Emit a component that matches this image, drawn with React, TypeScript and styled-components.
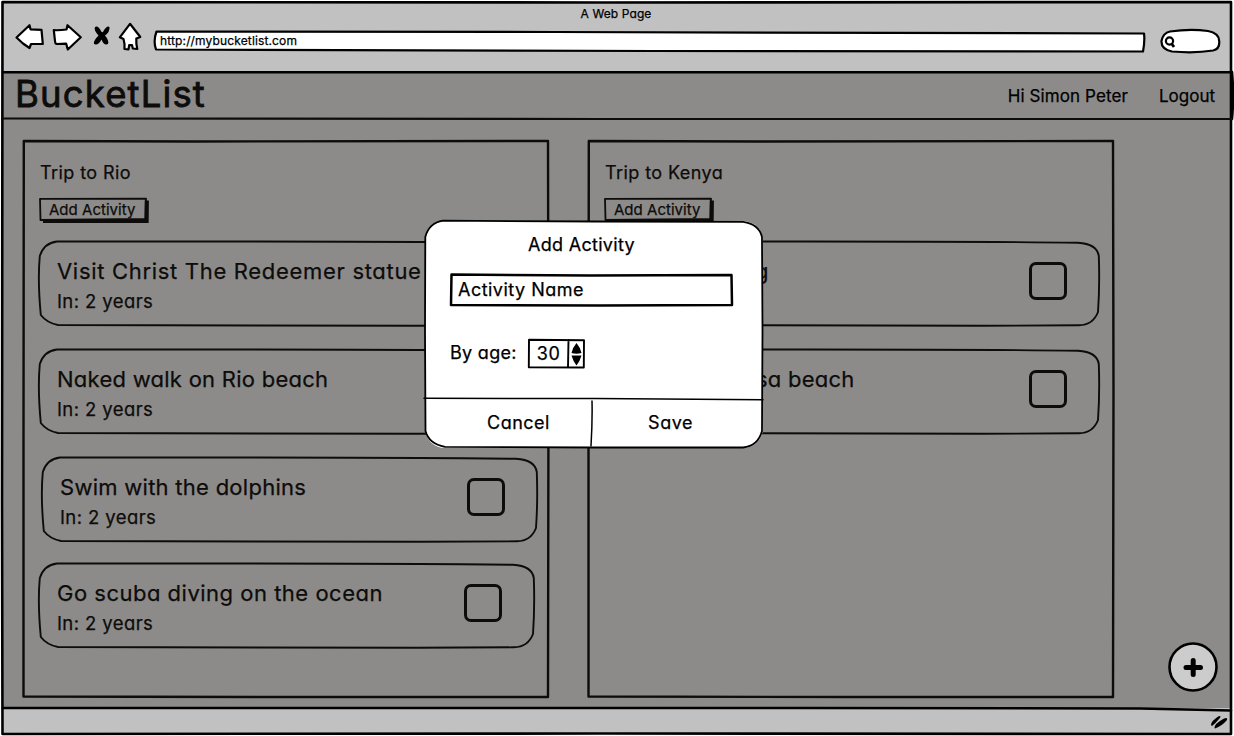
import React from 'react';
import styled, { createGlobalStyle } from 'styled-components';

const ink = '#0d0c0b';

const GlobalStyle = createGlobalStyle`
  * { box-sizing: border-box; }
  body {
    margin: 0;
    background: #fff;
    color: ${ink};
    font-family: Inter, "Open Sans", sans-serif;
    font-feature-settings: 'cv11';
    overflow: hidden;
  }
`;

const Browser = styled.div`
  position: relative;
  display: flex;
  flex-direction: column;
  width: 1234px;
  height: 736px;
  padding: 2px 3px 2px 3px;
`;

const Text = styled.span<{ $size: number; $track?: number }>`
  display: block;
  font-size: ${p => p.$size}px;
  letter-spacing: ${p => p.$track ?? 0}px;
  line-height: 24px;
  white-space: nowrap;
  -webkit-text-stroke: 0.25px currentColor;
`;

const Drawing = styled.svg`
  position: absolute;
  inset: 0;
  width: 100%;
  height: 100%;
  overflow: visible;
  pointer-events: none;
  fill: none;
  stroke: ${ink};
  stroke-linejoin: round;
  stroke-linecap: round;
`;

const Chrome = styled.header`
  display: flex;
  flex-direction: column;
  flex: 0 0 70px;
  background: #c1c1c1;
  color: #000;
`;

const WindowTitle = styled.div`
  display: flex;
  justify-content: center;
  height: 24px;
  padding-right: 2px;
`;

const Toolbar = styled.div`
  display: flex;
  align-items: flex-start;
  height: 30px;
  margin-top: -4px;
`;

const NavIcons = styled.svg`
  flex: none;
  width: 151px;
  height: 30px;
  fill: #fff;
  stroke: #000;
  stroke-width: 2.2;
  stroke-linejoin: round;
`;

const AddressBar = styled.div`
  position: relative;
  width: 990px;
  height: 20px;
  margin-top: 9px;
  padding-left: 6px;
  display: flex;
  align-items: center;
`;

const Url = styled(Text)`
  position: relative;
`;

const SearchPill = styled.svg`
  flex: none;
  width: 62px;
  height: 30px;
  margin-left: 15px;
  margin-top: 5px;
  fill: #fff;
  stroke: #000;
  stroke-width: 2.2;
`;

const NavBar = styled.nav`
  display: flex;
  align-items: center;
  flex: 0 0 47px;
  padding: 0 16px 0 12px;
  background: #8c8b89;
`;

const Brand = styled(Text)`
  flex: 1;
  line-height: 42px;
  margin-top: -3px;
  -webkit-text-stroke-width: 0.8px;
`;

const UserName = styled(Text)`
  margin-right: 31px;
  color: #000;
`;

const Logout = styled(Text)`
  color: #000;
`;

const Board = styled.main`
  display: flex;
  align-items: flex-start;
  gap: 39px;
  flex: 1;
  padding: 22px 0 0 20px;
  background: #8c8b89;
`;

const Panel = styled.section`
  position: relative;
  display: flex;
  flex-direction: column;
  align-items: flex-start;
  width: 526px;
  height: 557px;
  padding: 20px 0 0 16px;
`;

const PanelTitle = styled(Text)`
  padding-left: 1px;
`;

const AddButton = styled.button`
  position: relative;
  width: 108px;
  height: 23px;
  margin: 13px 0 20px;
  padding: 0 0 0 10px;
  border: 0;
  background: none;
  color: inherit;
  font-family: inherit;
  font-feature-settings: inherit;
  text-align: left;
`;

const CardList = styled.div`
  display: flex;
  flex-direction: column;
`;

const Card = styled.article<{ $shift: number; $gap: number }>`
  position: relative;
  display: flex;
  justify-content: space-between;
  width: 496px;
  height: 84px;
  margin-left: ${p => p.$shift}px;
  margin-bottom: ${p => p.$gap}px;
  padding: 18px 33px 0 18px;
`;

const CardText = styled.div<{ $indent: number }>`
  padding-left: ${p => p.$indent}px;
`;

const Due = styled(Text)`
  margin-top: 6px;
`;

const Checkbox = styled.div`
  width: 38px;
  height: 38px;
  margin-top: 3px;
  border: 3px solid ${ink};
  border-radius: 7px;
`;

const StatusBar = styled.footer`
  display: flex;
  justify-content: flex-end;
  align-items: center;
  flex: 0 0 26px;
  padding-right: 2px;
  background: #c1c1c1;
`;

const Grip = styled.svg`
  width: 20px;
  height: 16px;
  fill: #000;
`;

const Fab = styled.button`
  position: absolute;
  left: 1168px;
  top: 642px;
  width: 50px;
  height: 50px;
  padding: 0;
  border: 0;
  background: none;
`;

const Modal = styled.div`
  position: absolute;
  left: 425px;
  top: 221px;
  display: flex;
  flex-direction: column;
  width: 338px;
  height: 227px;
  background: #fff;
  border-radius: 20px;
  color: #000;
`;

const ModalBody = styled.div`
  flex: 0 0 178px;
  padding: 12px 30px 0 25px;
`;

const ModalTitle = styled(Text)`
  padding-left: 78px;
`;

const NameField = styled.div`
  position: relative;
  display: flex;
  align-items: center;
  height: 31px;
  margin-top: 17px;
  padding-left: 8px;
`;

const AgeRow = styled.div`
  display: flex;
  align-items: center;
  gap: 11px;
  height: 30px;
  margin-top: 33px;
`;

const Stepper = styled.div`
  position: relative;
  display: flex;
  align-items: center;
  width: 57px;
  height: 29px;
  padding: 2px 0 0 9px;
`;

const ModalActions = styled.div`
  display: grid;
  grid-template-columns: 167px 1fr;
  flex: 1;
`;

const Action = styled.div<{ $offset: number }>`
  display: flex;
  align-items: center;
  justify-content: center;
  padding-left: ${p => Math.max(p.$offset, 0)}px;
  padding-right: ${p => Math.max(-p.$offset, 0)}px;
  padding-bottom: 2px;
`;

type Activity = { title: string; due?: string; track?: number; indent?: number; shift?: number; gap?: number };

function ActivityCard({ title, due, track = 0.3, indent = 0, shift = 0, gap = 24 }: Activity) {
  return (
    <Card $shift={shift} $gap={gap}>
      <Drawing viewBox="0 0 496 84" strokeWidth="1.900">
        <path d="M18 .5 C160 .8 330 -.3 474 1.800 Q493 3 494.800 15 C495.500 34 495.200 54 494 71 Q489 84 475 84.300 C320 85.500 160 84.800 19 84 Q8 82 1.800 74 C-.3 52 -.8 32 .8 15 Q5 2 18 .5 Z" />
      </Drawing>
      <CardText $indent={indent}>
        <Text $size={22} $track={track}>{title}</Text>
        {due && <Due $size={18.5} $track={0.4}>{due}</Due>}
      </CardText>
      <Checkbox />
    </Card>
  );
}

function TripPanel({ name, activities }: { name: string; activities: Activity[] }) {
  return (
    <Panel>
      <Drawing viewBox="0 0 526 557" strokeWidth="2.400">
        <path d="M.8 0 L170 .5 L525 0 L525.500 250 L525 556 L260 556 L.5 555.500 L.5 300 Z" />
      </Drawing>
      <PanelTitle $size={18} $track={0.42}>{name}</PanelTitle>
      <AddButton>
        <Drawing viewBox="0 0 108 23">
          <path strokeWidth="4.200" strokeLinecap="butt" strokeLinejoin="miter" d="M4 23 L107.600 22.800 L107.800 2.500" />
          <path strokeWidth="1.800" d="M1 .8 L107 .6 L106.500 21 L1.500 22 Z" />
        </Drawing>
        <Text $size={15} $track={0.02}>Add Activity</Text>
      </AddButton>
      <CardList>
        {activities.map(a => <ActivityCard key={a.title} {...a} />)}
      </CardList>
    </Panel>
  );
}

const rio: Activity[] = [
  { title: 'Visit Christ The Redeemer statue', due: 'In: 2 years', track: 0.69 },
  { title: 'Naked walk on Rio beach', due: 'In: 2 years', track: 0.26 },
  { title: 'Swim with the dolphins', due: 'In: 2 years', track: 0.27, shift: 3, gap: 22 },
  { title: 'Go scuba diving on the ocean', due: 'In: 2 years', track: 0.5 },
];

const kenya: Activity[] = [
  { title: 'g', indent: 133 },
  { title: 'sa beach', indent: 134, track: 0.25 },
];

export default function App() {
  return (
    <>
      <GlobalStyle />
      <Browser>
        <Chrome>
          <WindowTitle><Text $size={12} $track={0.1}>A Web Page</Text></WindowTitle>
          <Toolbar>
            <NavIcons viewBox="3 22 151 30">
              <path d="M16.500 37.500 L29.500 25.200 L30.500 29.300 L41.500 29.800 L42.800 44 L31 44 L29.500 48 L23 43.500 Z" />
              <path d="M53.800 30.200 Q60 30.500 66.500 29.500 L67.500 25.200 L80.800 37.200 L67.800 49.500 L66.200 43.700 L56.500 44 Q55 43.500 55 41 Z" />
              <path fill="#000" stroke="none" d="M95 27 Q98 25 101 31 Q102.500 33.500 103.500 31 Q107 25 109.500 27 Q110 32 105 35.500 Q109.500 41 108 44 Q104 46 101.500 39.500 Q98 46 94 44 Q93 41 98.500 35.500 Q93.500 30 95 27 Z" />
              <path d="M130 23.800 L140.300 37 L136.300 38.500 Q136 44 137.300 49 L132.800 48.500 L132 45 L129.200 45.200 L128.500 49.300 L124.500 49 Q125 44 123.500 39 L119.800 37.300 Z" />
            </NavIcons>
            <AddressBar>
              <Drawing viewBox="0 0 990 20" strokeWidth="2.200">
                <path fill="#fff" stroke="#000" d="M2.500 .5 L400 1 L990 2.500 Q991 10 989 20.500 L500 20 L2 18.500 Q-1 10 2.500 .5 Z" />
              </Drawing>
              <Url $size={12} $track={0.14}>http://mybucketlist.com</Url>
            </AddressBar>
            <SearchPill viewBox="1159 27 62 30">
              <path d="M1170 31.500 Q1190 28.500 1208 31 Q1219 33 1219.200 41 Q1220 49 1213 50.500 Q1195 53.500 1172 51.500 Q1161 49 1161.500 41 Q1163 33 1170 31.500 Z" />
              <circle cx="1169.500" cy="41" r="3.600" />
              <path strokeWidth="2.800" d="M1171.500 43.500 L1174 47" />
            </SearchPill>
          </Toolbar>
        </Chrome>
        <NavBar>
          <Brand $size={36.5} $track={1.15}>BucketList</Brand>
          <UserName $size={17} $track={0.1}>Hi Simon Peter</UserName>
          <Logout $size={17}>Logout</Logout>
        </NavBar>
        <Board>
          <TripPanel name="Trip to Rio" activities={rio} />
          <TripPanel name="Trip to Kenya" activities={kenya} />
        </Board>
        <StatusBar>
          <Grip viewBox="1209 714 20 16">
            <path d="M1211 726 Q1211 722 1219 717 Q1222 717 1219 720 Q1215 725 1212 727 Z" />
            <path d="M1214.500 729 Q1214 725 1224 719.500 Q1228 718 1227 721 Q1222 727 1215 729.500 Z" />
          </Grip>
        </StatusBar>
        <Drawing viewBox="0 0 1234 736" strokeWidth="2.600">
          <path stroke="#000" d="M2.500 2 L600 2.500 L1231 2 L1231 734 L600 733.500 L2.500 734 L2 500 Z" />
          <path stroke="#000" d="M3 72.300 L1232 72.300 M1232 72 Q1234 95 1232 119" />
          <path strokeWidth="2.200" d="M2 118.500 L600 119 L1232 119" />
          <path stroke="#000" d="M3 708 L800 708 L1140 708.500 L1231 710.500" />
        </Drawing>
        <Fab aria-label="Add list">
          <Drawing viewBox="0 0 50 50">
            <circle cx="25" cy="25" r="23.500" fill="#ccc" stroke="#000" strokeWidth="2.600" />
            <path stroke="#000" strokeWidth="5" d="M18 25.500 H32.500 M25.200 18.500 V32.500" />
          </Drawing>
        </Fab>
        <Modal>
          <ModalBody>
            <ModalTitle $size={18} $track={0.3}>Add Activity</ModalTitle>
            <NameField>
              <Drawing viewBox="0 0 283 31" strokeWidth="2.500">
                <path stroke="#000" d="M1.500 .5 L140 1.500 L281.500 1 L282 31 L150 31.500 L1 31 Z" />
              </Drawing>
              <Text $size={18} $track={0.48}>Activity Name</Text>
            </NameField>
            <AgeRow>
              <Text $size={18} $track={0.3}>By age:</Text>
              <Stepper>
                <Drawing viewBox="0 0 57 29" strokeWidth="1.900">
                  <path stroke="#000" d="M1 .8 L56 1.200 L55.800 28.500 L.8 28.200 Z M40.500 1 L40 28" />
                  <path fill="#000" stroke="none" d="M48.500 4 Q52 8 53.500 14 Q48.500 15.500 43.500 14 Q45 8 48.500 4 Z M43.500 16.500 H53.500 Q52 22 48.500 26.500 Q45 22 43.500 16.500 Z" />
                </Drawing>
                <Text $size={18} $track={0.5}>30</Text>
              </Stepper>
            </AgeRow>
          </ModalBody>
          <ModalActions>
            <Action $offset={20}><Text $size={18} $track={0.5}>Cancel</Text></Action>
            <Action $offset={-14}><Text $size={18} $track={0.5}>Save</Text></Action>
          </ModalActions>
          <Drawing viewBox="0 0 338 227" strokeWidth="1.800">
            <path stroke="#000" d="M18 -.3 L170 .5 L318 .8 Q334 3 337 16 L337.500 110 L337 210 Q333 225 318 226.500 L170 226.500 L20 225.800 Q4 223 .5 210 L0 110 L.3 16 Q4 2 18 -.3 Z" />
            <path stroke="#000" strokeWidth="1.500" d="M-1 177.300 L170 177.500 L338 178.800 M167 180 Q167.500 200 166 225" />
          </Drawing>
        </Modal>
      </Browser>
    </>
  );
}
